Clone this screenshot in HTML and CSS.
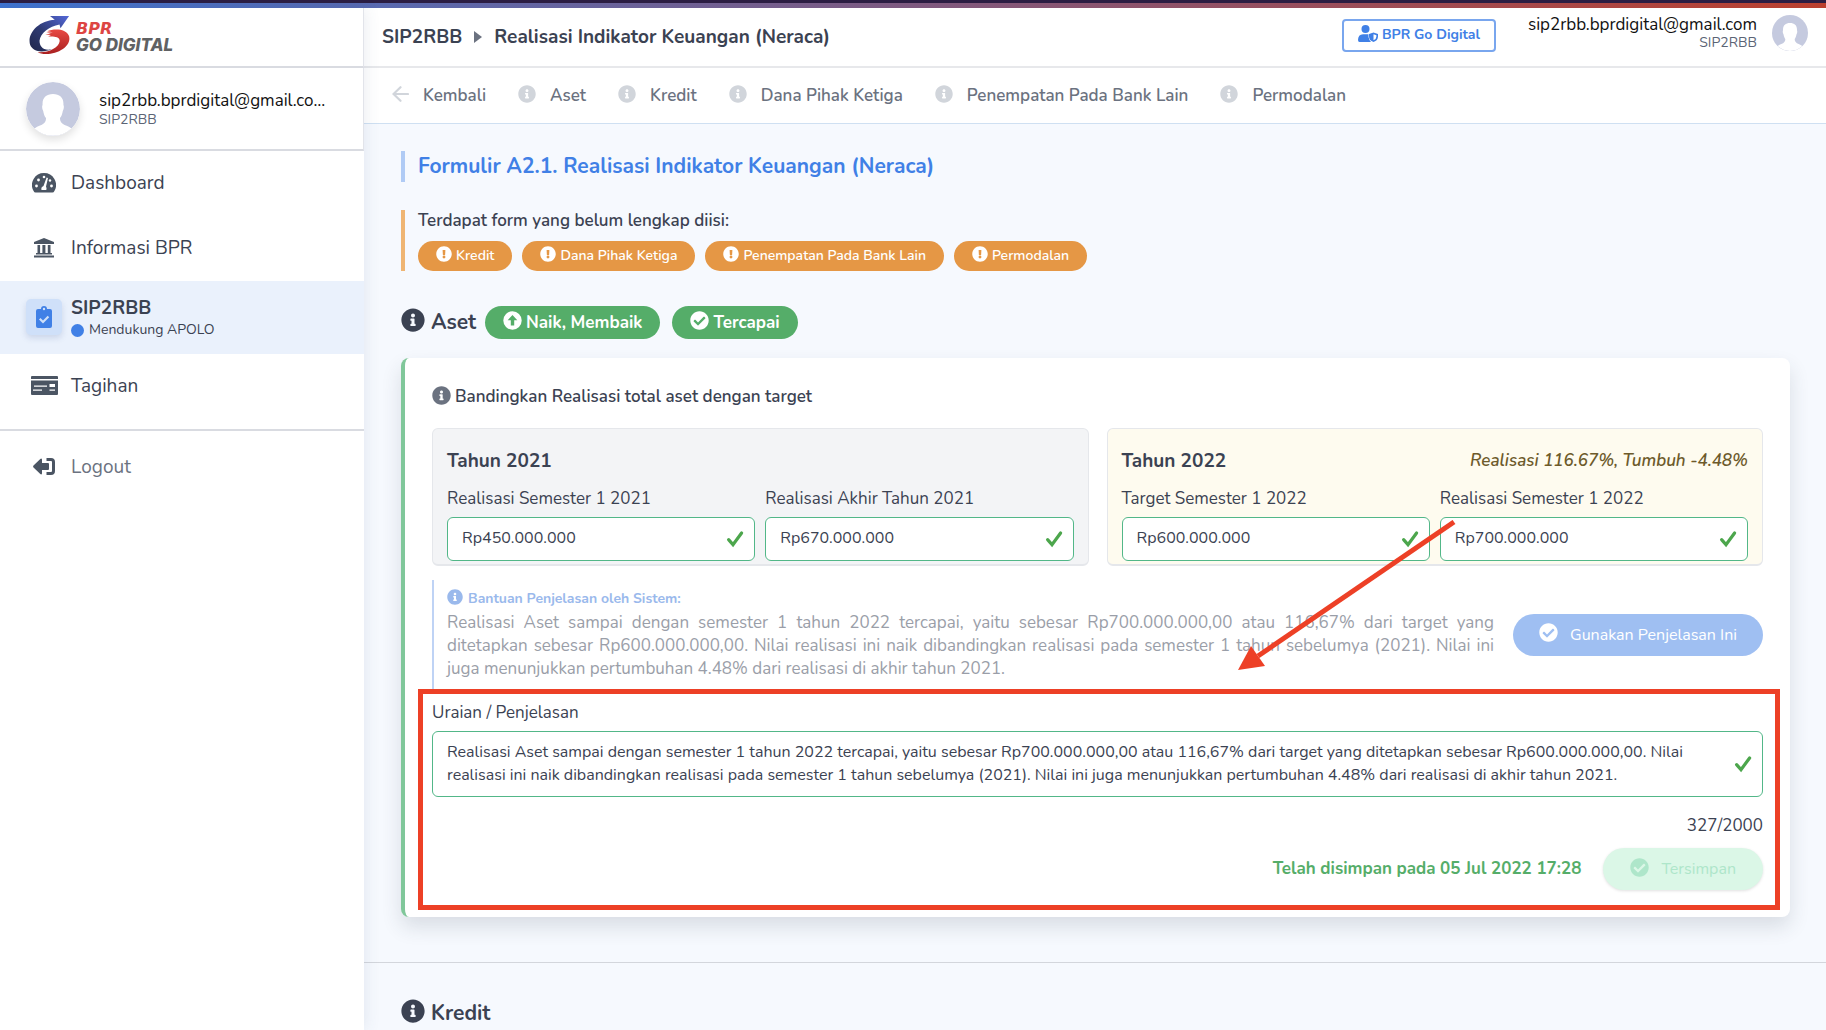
FILE: index.html
```html
<!DOCTYPE html>
<html lang="id">
<head>
<meta charset="utf-8">
<meta name="viewport" content="width=device-width, initial-scale=1">
<title>SIP2RBB - Realisasi Indikator Keuangan (Neraca)</title>
<link rel="stylesheet" href="styles.css">
</head>
<body>
<svg class="sprite" aria-hidden="true">
  <symbol id="info" viewBox="0 0 512 512"><path d="M256 8C119.043 8 8 119.083 8 256c0 136.997 111.043 248 248 248s248-111.003 248-248C504 119.083 392.957 8 256 8zm0 110c23.196 0 42 18.804 42 42s-18.804 42-42 42-42-18.804-42-42 18.804-42 42-42zm56 254c0 6.627-5.373 12-12 12h-88c-6.627 0-12-5.373-12-12v-24c0-6.627 5.373-12 12-12h12v-64h-12c-6.627 0-12-5.373-12-12v-24c0-6.627 5.373-12 12-12h64c6.627 0 12 5.373 12 12v100h12c6.627 0 12 5.373 12 12v24z"/></symbol>
  <symbol id="warn" viewBox="0 0 512 512"><path d="M504 256c0 136.997-111.043 248-248 248S8 392.997 8 256C8 119.083 119.043 8 256 8s248 111.083 248 248zm-248 50c-25.405 0-46 20.595-46 46s20.595 46 46 46 46-20.595 46-46-20.595-46-46-46zm-43.673-165.346l7.418 136c.347 6.364 5.609 11.346 11.982 11.346h48.546c6.373 0 11.635-4.982 11.982-11.346l7.418-136c.375-6.874-5.098-12.654-11.982-12.654h-63.383c-6.884 0-12.356 5.78-11.981 12.654z"/></symbol>
  <symbol id="check-circle" viewBox="0 0 512 512"><path d="M504 256c0 136.967-111.033 248-248 248S8 392.967 8 256 119.033 8 256 8s248 111.033 248 248zM227.314 387.314l184-184c6.248-6.248 6.248-16.379 0-22.627l-22.627-22.627c-6.248-6.249-16.379-6.249-22.628 0L216 308.118l-70.059-70.059c-6.248-6.248-16.379-6.248-22.628 0l-22.627 22.627c-6.248 6.248-6.248 16.379 0 22.627l104 104c6.249 6.249 16.379 6.249 22.628.001z"/></symbol>
  <symbol id="up-circle" viewBox="0 0 512 512"><path fill-rule="evenodd" d="M256 8a248 248 0 1 0 0 496a248 248 0 1 0 0-496zM256 108L386 246H302V392H210V246H126z"/></symbol>
  <symbol id="tick" viewBox="0 0 18 18"><path d="M2.6 9.6L7 14.6L15.6 3" fill="none" stroke="#4ca64c" stroke-width="3.2" stroke-linecap="round" stroke-linejoin="miter"/></symbol>
  <symbol id="avatar" viewBox="0 0 54 54"><circle cx="27" cy="27" r="27" fill="#c5cadf"/><path fill="#fff" d="M27 12c7 0 11 4 10.400 11 .8 1 .6 4-.6 6-1 5-2 6-2.800 7 0 4 2 6 6 7.500 2 .8 4 1.800 5.500 3A27 27 0 0 1 8.500 46.500c1.500-1.200 3.500-2.200 5.500-3 4-1.500 6-3.500 6-7.500-.8-1-1.800-2-2.800-7-1.200-2-1.400-5-.6-6C16 16 20 12 27 12z"/></symbol>
</svg>

<div class="app">
  <div class="strip"></div>
  <aside class="sidebar">
    <div class="brand">
      <svg width="44" height="40" viewBox="0 0 44 42" aria-hidden="true">
        <defs>
          <linearGradient id="navy" x1="1" y1="0" x2="0" y2="1"><stop offset="0" stop-color="#5468d8"/><stop offset=".55" stop-color="#2e3a72"/><stop offset="1" stop-color="#20264a"/></linearGradient>
          <linearGradient id="red" x1="0" y1="0" x2="0" y2="1"><stop offset="0" stop-color="#e84a44"/><stop offset="1" stop-color="#a92020"/></linearGradient>
        </defs>
        <path fill="url(#navy)" d="M22 1L42 1L33 14L32 10C21 12 12 19 11 27C11 33 15 38 24 36C14 40 4 39 1 31C-2 19 10 6 27 5Z"/>
        <path fill="url(#red)" d="M19 17C26 14 39 14 42 22C45 33 30 41 18 41C14 41 11 40 9 39C20 40 31 34 32 28C33 24 29 23 25 22.500L20 22.500L23 21L17 20.500L23 19.500L18 18.500L25 18z"/>
      </svg>
      <div class="brand-name"><span class="brand-top">BPR</span><span>GO DIGITAL</span></div>
    </div>
    <div class="user">
      <svg class="avatar" width="54" height="54"><use href="#avatar"/></svg>
      <div class="user-text"><div class="email">sip2rbb.bprdigital@gmail.com</div><div class="role">SIP2RBB</div></div>
    </div>
    <nav class="menu">
      <a href="#dashboard"><span class="menu-icon"><svg width="24" height="20" viewBox="0 0 24 20"><path fill="currentColor" d="M12 0a12 12 0 0 0-10.400 18q.6 1.500 2 1.500h16.800q1.400 0 2-1.500A12 12 0 0 0 12 0z"/><g fill="#fff"><circle cx="4.500" cy="13" r="1.400"/><circle cx="6.500" cy="7" r="1.400"/><circle cx="12" cy="4" r="1.300"/><circle cx="19.500" cy="13" r="1.400"/><circle cx="18" cy="7.500" r="1.200"/><path d="M14.600 4.500l1.400.5-2 8.500q1 1.500.3 3.500H9.500q-.8-3 2-4z"/></g></svg></span>Dashboard</a>
      <a href="#informasi"><span class="menu-icon"><svg width="20" height="20" viewBox="0 0 20 20"><path fill="currentColor" d="M10 0L20 4V6H0V4zM3.500 7h2.600v8h2.300V7h3v8h2.400V7h2.700v8H18v1.500H2V15h1.500zM0 17.500H20V19.500H0z"/></svg></span>Informasi BPR</a>
      <a href="#sip2rbb" class="active"><span class="menu-icon tile"><svg width="16" height="22" viewBox="0 0 16 22"><path fill="currentColor" fill-rule="evenodd" d="M2 3H5A3 3 0 0 1 11 3H14Q16 3 16 5V20Q16 22 14 22H2Q0 22 0 20V5Q0 3 2 3zM8 1.800a1.200 1.200 0 1 0 0 2.400a1.200 1.200 0 1 0 0-2.400zM4.500 12L3 13.600L7 17.600L13.200 11.200L11.700 9.700L7 14.500z"/></svg></span><span class="menu-text"><strong>SIP2RBB</strong><small><i class="dot"></i>Mendukung APOLO</small></span></a>
      <a href="#tagihan"><span class="menu-icon"><svg width="27" height="19" viewBox="0 0 27 19"><path fill="currentColor" fill-rule="evenodd" d="M1 0H26Q27 0 27 1V3H0V1Q0 0 1 0zM0 4.500H27V18Q27 19 26 19H1Q0 19 0 18zM3 9.500V10.700H16V9.500zM2 13.500V14.700H11V13.500zM18.500 8V11H24V8zM18.500 13.500V14.700H24V13.500z"/></svg></span>Tagihan</a>
      <hr>
      <a href="#logout" class="logout"><span class="menu-icon"><svg width="22" height="17" viewBox="0 0 22 17"><path fill="currentColor" d="M9 1.500V5H15Q16 5 16 6V11Q16 12 15 12H9V15.500Q8.500 17 7.300 16L.5 9.500Q-.3 8.500.5 7.500L7.300 1Q8.500 0 9 1.500z"/><path fill="none" stroke="currentColor" stroke-width="3" stroke-linejoin="round" d="M13.500 1.500H18Q20.500 1.500 20.500 4V13Q20.500 15.500 18 15.500H13.500"/></svg></span>Logout</a>
    </nav>
  </aside>

  <div class="page">
    <header class="topbar">
      <div class="crumbs"><a href="#sip2rbb">SIP2RBB</a><svg width="8" height="12" viewBox="0 0 8 12"><path d="M0 0L8 6L0 12z" fill="#6b7280"/></svg><span>Realisasi Indikator Keuangan (Neraca)</span></div>
      <button type="button" class="bank-btn"><svg width="20" height="17" viewBox="0 0 20 17"><g fill="currentColor"><circle cx="7.500" cy="4" r="4"/><path d="M0 15Q0 9.500 5 9.200H10.500V12Q11 15 13 17H1.500Q0 17 0 15z"/><path fill-rule="evenodd" d="M15.500 7.500L20 9V11.500Q20 15.500 15.500 17Q11 15.500 11 11.500V9zM15.500 9.200V15.300Q18.400 14 18.400 11.500V10.200z"/></g></svg>BPR Go Digital</button>
      <div class="account"><div><div class="email">sip2rbb.bprdigital@gmail.com</div><div class="role">SIP2RBB</div></div><svg width="36" height="36"><use href="#avatar"/></svg></div>
    </header>
    <nav class="tabs">
      <a href="#kembali"><svg width="17" height="16" viewBox="0 0 17 16"><path d="M8.500 1.200L1.500 8L8.500 14.800M1.800 8H16" fill="none" stroke="currentColor" stroke-width="2.200" stroke-linecap="round"/></svg>Kembali</a>
      <a href="#aset"><svg width="18" height="18"><use href="#info"/></svg>Aset</a>
      <a href="#kredit"><svg width="18" height="18"><use href="#info"/></svg>Kredit</a>
      <a href="#dpk"><svg width="18" height="18"><use href="#info"/></svg>Dana Pihak Ketiga</a>
      <a href="#penempatan"><svg width="18" height="18"><use href="#info"/></svg>Penempatan Pada Bank Lain</a>
      <a href="#permodalan"><svg width="18" height="18"><use href="#info"/></svg>Permodalan</a>
    </nav>

    <main class="content">
      <h1>Formulir A2.1. Realisasi Indikator Keuangan (Neraca)</h1>
      <section class="notice">
        <p>Terdapat form yang belum lengkap diisi:</p>
        <div class="pills">
          <a href="#kredit"><svg width="16" height="16"><use href="#warn"/></svg>Kredit</a>
          <a href="#dpk"><svg width="16" height="16"><use href="#warn"/></svg>Dana Pihak Ketiga</a>
          <a href="#penempatan"><svg width="16" height="16"><use href="#warn"/></svg>Penempatan Pada Bank Lain</a>
          <a href="#permodalan"><svg width="16" height="16"><use href="#warn"/></svg>Permodalan</a>
        </div>
      </section>

      <div class="section-head" id="aset">
        <svg width="24" height="24"><use href="#info"/></svg><h2>Aset</h2>
        <span class="badge"><svg width="19" height="19"><use href="#up-circle"/></svg>Naik, Membaik</span>
        <span class="badge"><svg width="19" height="19"><use href="#check-circle"/></svg>Tercapai</span>
      </div>

      <section class="card">
        <h3><svg width="19" height="19"><use href="#info"/></svg>Bandingkan Realisasi total aset dengan target</h3>
        <div class="years">
          <div class="year">
            <div class="year-head"><h4>Tahun 2021</h4></div>
            <div class="fields">
              <div class="field"><label for="s1-2021">Realisasi Semester 1 2021</label><div class="control"><input id="s1-2021" type="text" value="Rp450.000.000"><svg width="18" height="18"><use href="#tick"/></svg></div></div>
              <div class="field"><label for="akhir-2021">Realisasi Akhir Tahun 2021</label><div class="control"><input id="akhir-2021" type="text" value="Rp670.000.000"><svg width="18" height="18"><use href="#tick"/></svg></div></div>
            </div>
          </div>
          <div class="year current">
            <div class="year-head"><h4>Tahun 2022</h4><em>Realisasi 116.67%, Tumbuh -4.48%</em></div>
            <div class="fields">
              <div class="field"><label for="target-2022">Target Semester 1 2022</label><div class="control"><input id="target-2022" type="text" value="Rp600.000.000"><svg width="18" height="18"><use href="#tick"/></svg></div></div>
              <div class="field"><label for="s1-2022">Realisasi Semester 1 2022</label><div class="control"><input id="s1-2022" type="text" value="Rp700.000.000"><svg width="18" height="18"><use href="#tick"/></svg></div></div>
            </div>
          </div>
        </div>

        <div class="help">
          <div class="help-text">
            <h5><svg width="16" height="16"><use href="#info"/></svg>Bantuan Penjelasan oleh Sistem:</h5>
            <p>Realisasi Aset sampai dengan semester 1 tahun 2022 tercapai, yaitu sebesar Rp700.000.000,00 atau 116,67% dari target yang ditetapkan sebesar Rp600.000.000,00. Nilai realisasi ini naik dibandingkan realisasi pada semester 1 tahun sebelumya (2021). Nilai ini juga menunjukkan pertumbuhan 4.48% dari realisasi di akhir tahun 2021.</p>
          </div>
          <button type="button" class="round use"><svg width="19" height="19"><use href="#check-circle"/></svg>Gunakan Penjelasan Ini</button>
        </div>

        <div class="explain">
          <label for="uraian">Uraian / Penjelasan</label>
          <div class="control"><textarea id="uraian" rows="2">Realisasi Aset sampai dengan semester 1 tahun 2022 tercapai, yaitu sebesar Rp700.000.000,00 atau 116,67% dari target yang ditetapkan sebesar Rp600.000.000,00. Nilai realisasi ini naik dibandingkan realisasi pada semester 1 tahun sebelumya (2021). Nilai ini juga menunjukkan pertumbuhan 4.48% dari realisasi di akhir tahun 2021.</textarea><svg width="18" height="18"><use href="#tick"/></svg></div>
          <div class="counter">327/2000</div>
          <div class="save"><span>Telah disimpan pada 05 Jul 2022 17:28</span><button type="button" class="round saved" disabled><svg width="19" height="19"><use href="#check-circle"/></svg>Tersimpan</button></div>
        </div>
        <svg class="pointer" width="220" height="152" viewBox="0 0 220 152" aria-hidden="true"><path d="M216 2L20 136" stroke="#ed4026" stroke-width="5"/><path d="M0 150L13 126L27 146z" fill="#ed4026"/></svg>
      </section>

      <div class="section-head next" id="kredit"><svg width="24" height="24"><use href="#info"/></svg><h2>Kredit</h2></div>
    </main>
  </div>
</div>
</body>
</html>
```
FILE: styles.css
```css
*{box-sizing:border-box}
body{margin:0;background:#f6f9fe;color:#3b4252;font:17px/24px "Nunito","Open Sans","Noto Sans",sans-serif}
h1,h2,h3,h4,h5,p{margin:0}
a{color:inherit;text-decoration:none}
button,input,textarea{font:inherit;color:inherit;margin:0}
svg{fill:currentColor;flex:none;display:block}
.sprite{position:absolute;width:0;height:0}

.app{display:grid;grid-template-columns:364px minmax(0,1fr);grid-template-rows:8px 1fr;min-height:100vh}
.strip{grid-column:1 / -1;border-top:3px solid #2b1d42;background:linear-gradient(90deg,#3f74d1,#7f5a80 50%,#bb402f)}

/* Sidebar */
.sidebar{background:#fff;box-shadow:0 0 16px rgba(60,80,120,.12);z-index:1}
.brand,.user{display:flex;align-items:center;border-bottom:2px solid #d9dbe1;border-right:1px solid #e2e4ea}
.brand{height:60px;padding:0 28px 4px;gap:4px}
.brand-name{display:flex;flex-direction:column;font:italic 800 17px/16px "Inter",sans-serif;color:#606163;padding-top:4px}
.brand-top{color:#dd4543;font:italic 700 16px/16px "DejaVu Sans",sans-serif}
.user{height:83px;padding:0 26px;gap:19px}
.avatar{border-radius:50%;box-shadow:0 4px 8px rgba(0,0,0,.12)}
.user-text{min-width:0;width:228px}
.user-text .email{overflow:hidden;text-overflow:ellipsis;line-height:22px}
.email{color:#111;line-height:20px;white-space:nowrap}
.role{font-size:14px;line-height:16px;color:#5b6475}
.menu a{display:flex;align-items:center;min-height:65px;padding:0 26px 2px;gap:9px;font-size:19px}
.menu-icon{width:36px;height:36px;display:flex;align-items:center;justify-content:center;color:#4b5563}
.menu .active{min-height:73px;background:#eaf1fc}
.tile{background:#cfe0f9;color:#4080e6;border-radius:5px;box-shadow:0 3px 6px rgba(60,90,150,.18)}
.menu-text{display:flex;flex-direction:column;padding-top:3px}
.menu-text strong{font-size:19px;line-height:24px}
.menu-text small{display:flex;align-items:center;gap:5px;font-size:14px;line-height:20px}
.dot{width:13px;height:13px;border-radius:50%;background:#4080e6}
.menu hr{border:0;height:2px;background:#d9dbe1;margin:10px 0 4px}
.menu .logout{color:#6b7280}

/* Header */
.page{min-width:0}
.topbar{height:60px;background:#fff;border-bottom:2px solid #e7e8eb;display:flex;align-items:center;padding:0 18px;gap:32px}
.crumbs{display:flex;align-items:center;gap:12px;margin-right:auto;font-size:19px;font-weight:700}
.bank-btn{display:flex;align-items:center;gap:4px;height:33px;padding:0 14px;margin-bottom:4px;border:2px solid #79a6ee;border-radius:4px;background:#fff;color:#4080e6;font-size:14px;font-weight:700}
.bank-btn svg{margin-bottom:4px}
.account{display:flex;align-items:center;gap:15px;text-align:right;padding-bottom:8px}
.tabs{height:56px;background:#fff;border-bottom:1px solid #cfe0f2;display:flex;align-items:center;padding:0 28px;gap:32px;font-weight:600;color:#6b7280}
.tabs a{display:flex;align-items:center;gap:14px}
.tabs svg{color:#d1d5db;margin-bottom:4px}

/* Form overview */
.content{padding:27px 36px 0 37px}
h1{border-left:4px solid #b0cbf5;padding-left:13px;font-size:21px;line-height:31px;color:#4080e6}
.notice{margin-top:28px;border-left:4px solid #efb573;padding-left:13px}
.notice p{font-weight:600;line-height:22px}
.pills{display:flex;gap:10px;padding-top:9px}
.pills a{display:flex;align-items:center;gap:4px;height:30px;padding:0 18px;border-radius:15px;background:#e59745;color:#fff;font-size:14px;font-weight:600}
.pills svg,.badge svg,.card h3 svg,.help h5 svg,.round svg{margin-bottom:4px}
.section-head{display:flex;align-items:center;margin-top:35px;height:33px}
.section-head>svg{margin-bottom:6px}
h2{font-size:21px;margin:0 9px 2px 6px}
.badge{display:flex;align-items:center;gap:4px;height:33px;padding:0 18px;margin-right:12px;border-radius:17px;background:#55ad69;color:#fff;font-weight:700}

/* Aset card */
.card{position:relative;margin-top:19px;padding:27px 27px 27px;border-left:4px solid #80c79a;border-radius:8px;background:#fff;box-shadow:0 10px 20px rgba(40,60,70,.14)}
.card h3{display:flex;align-items:center;gap:4px;font-size:17px;font-weight:600}
.card h3 svg{color:#6b7280}
.years{display:grid;grid-template-columns:1fr 1fr;gap:18px;margin-top:19px}
.year{padding:19px 14px 3px;border:1px solid #e5e7eb;border-bottom-width:2px;border-radius:6px;background:#f3f4f6}
.current{background:#fefbef}
.year-head{display:flex;justify-content:space-between;align-items:center;line-height:26px}
h4{font-size:19px}
.year-head em{font-weight:600;color:#6d5a2b}
.fields{display:grid;grid-template-columns:1fr 1fr;gap:10px;margin-top:13px}
.field label{display:block}
.control{position:relative;margin-top:6px}
.control input,.control textarea{display:block;width:100%;border:1px solid #52b788;border-radius:6px;background:#fff;outline:0;font-size:16px}
.control input{height:44px;padding:0 44px 3px 14px}
.control textarea{padding:9px 56px 9px 14px;line-height:23px;resize:none;overflow:hidden}
.control svg{position:absolute;right:11px;top:50%;margin-top:-9px}

.help{display:flex;align-items:center;gap:19px;margin-top:14px}
.help-text{flex:1;border-left:2px solid #bfd3f5;padding:6px 0 9px 13px}
.help h5{display:flex;align-items:center;gap:5px;font-size:14px;line-height:25px;color:#9ab9ec}
.help p{line-height:23px;text-align:justify;color:#9a9ea8}
.round{display:flex;align-items:center;justify-content:center;gap:12px;height:42px;border:0;border-radius:21px;padding:0 27px;font-size:16px;white-space:nowrap}
.use{background:#9fbff2;color:#fff;width:250px;padding:0 20px}

.explain{position:relative;padding-top:12px}
.explain::after{content:"";position:absolute;inset:0 -17px -20px -14px;border:5px solid #ed4026;pointer-events:none}
.explain label{display:block}
.counter{margin-top:17px;text-align:right}
.save{display:flex;align-items:center;justify-content:flex-end;gap:22px;margin-top:10px;font-weight:700;color:#55ad69}
.saved{background:#dbf7e7;color:#aee6ca;font-weight:400;box-shadow:0 1px 3px rgba(0,0,0,.12)}
.pointer{position:absolute;right:332px;top:162px}

.next{margin:45px -36px 0 -37px;padding:37px 37px 0;height:66px;border-top:1px solid #d3d6dc}
```
